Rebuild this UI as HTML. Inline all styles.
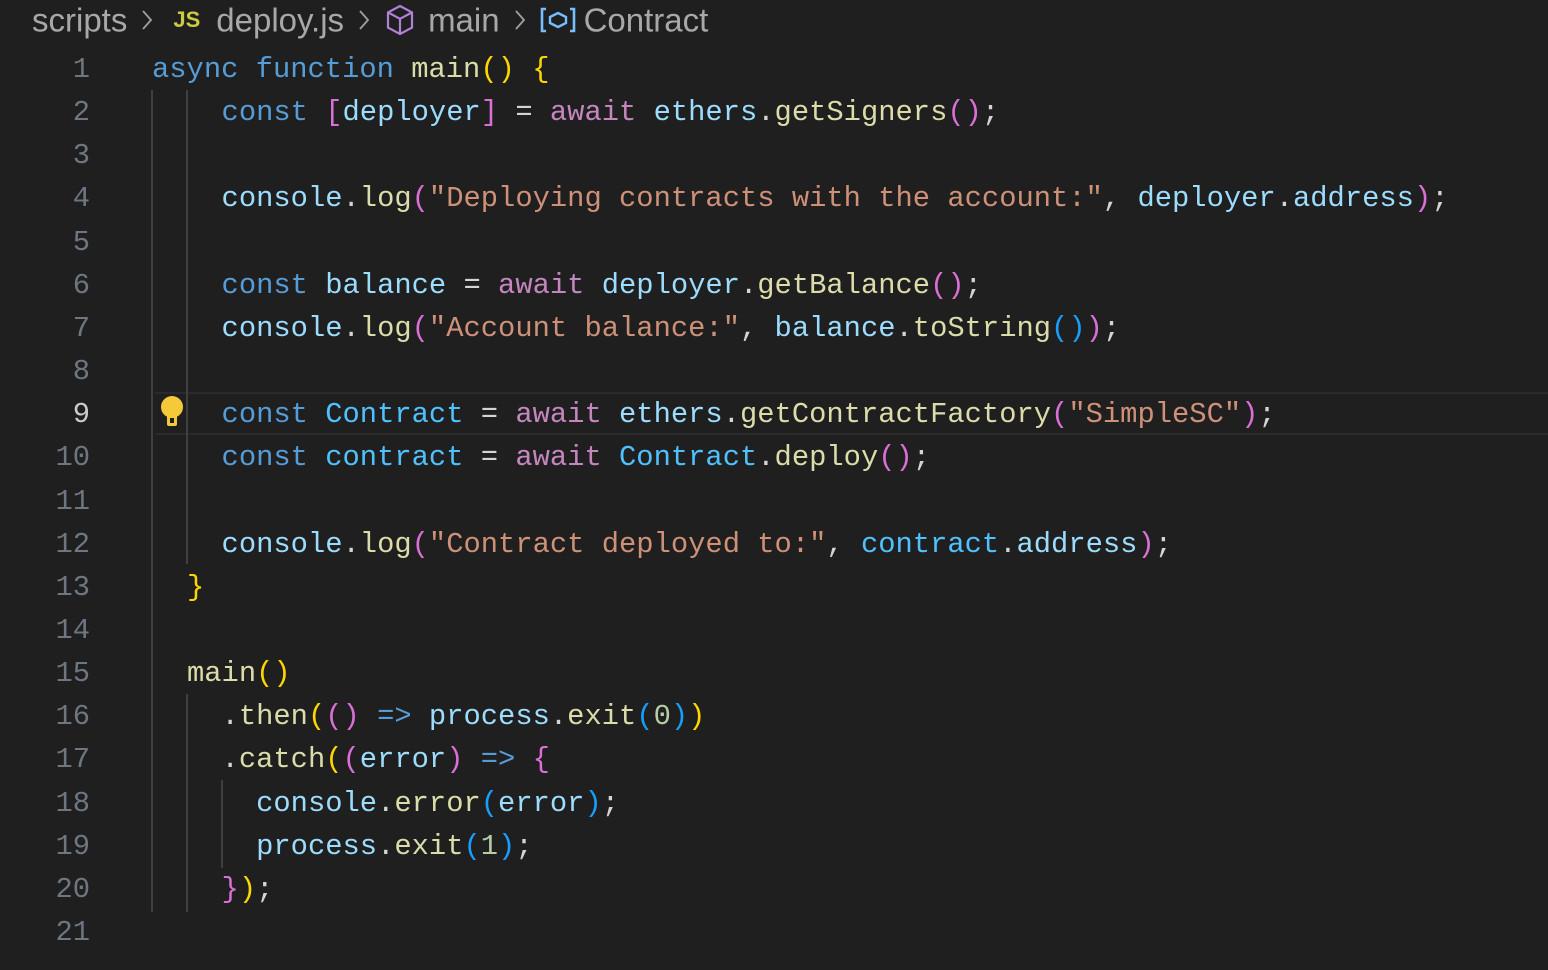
<!DOCTYPE html>
<html><head><meta charset="utf-8"><style>
body{margin:0;width:1548px;height:970px;background:#1f1f1f;overflow:hidden;position:relative;font-family:"Liberation Mono",monospace}
.bc{position:absolute;top:-2px;left:32px;height:40px;line-height:40px;font-family:"Liberation Sans",sans-serif;font-size:33px;color:#a8a8a8;white-space:nowrap}
.bc span,.bc svg{vertical-align:middle}
.sep{margin:0 14px 0 14px}
.ln{position:absolute;left:0;width:90px;text-align:right;font-size:28.8px;color:#6e7681;height:43.15px;line-height:43.15px}
.cl{position:absolute;font-size:28.8px;height:43.15px;line-height:43.15px;white-space:pre;color:#d4d4d4}
.g{position:absolute;width:2px;background:#404040}
.k{color:#569cd6}.v{color:#9cdcfe}.c{color:#4fc1ff}.f{color:#dcdcaa}.s{color:#ce9178}.a{color:#c586c0}.y{color:#ffd700}.p{color:#da70d6}.b{color:#179fff}.n{color:#b5cea8}
</style></head><body>
<div class="bc"><span>scripts</span><svg class="sep" width="12" height="24" viewBox="0 0 12 24"><path d="M2 3l8 9-8 9" fill="none" stroke="#a0a0a0" stroke-width="1.8"/></svg><span style="color:#cbcb41;font-weight:bold;font-size:22px;margin:0 16px 0 6px">JS</span><span>deploy.js</span><svg class="sep" width="12" height="24" viewBox="0 0 12 24"><path d="M2 3l8 9-8 9" fill="none" stroke="#a0a0a0" stroke-width="1.8"/></svg><svg width="32" height="34" viewBox="0 0 16 17" style="margin-right:12px"><path d="M8 1.5l6 3.2v7.6l-6 3.2-6-3.2V4.7z M2 4.7l6 3.2 6-3.2 M8 7.9v7.6" fill="none" stroke="#b180d7" stroke-width="1.1"/></svg><span>main</span><svg class="sep" width="12" height="24" viewBox="0 0 12 24"><path d="M2 3l8 9-8 9" fill="none" stroke="#a0a0a0" stroke-width="1.8"/></svg><svg width="36" height="26" viewBox="0 0 18 13" style="margin-right:8px"><path d="M3 1H1v11h2 M15 1h2v11h-2" fill="none" stroke="#75beff" stroke-width="1.3"/><path d="M9 3l4 2v3l-4 2-4-2V5z" fill="none" stroke="#75beff" stroke-width="1.2"/></svg><span>Contract</span></div>

<div style="position:absolute;left:155px;right:0;top:392px;height:43px;border-top:2px solid #2a2a2a;border-bottom:2px solid #2a2a2a;box-sizing:border-box"></div>

<div class="g" style="left:151px;top:90px;height:822px"></div>
<div class="g" style="left:186px;top:90px;height:474px"></div>
<div class="g" style="left:186px;top:694px;height:218px"></div>
<div class="g" style="left:221px;top:780px;height:88px"></div>

<svg style="position:absolute;left:159px;top:395px" width="26" height="34" viewBox="0 0 26 34"><circle cx="13" cy="12" r="11" fill="#f5c93a"/><rect x="8" y="18" width="10" height="13" rx="2" fill="#f5c93a"/><rect x="11" y="23" width="4" height="5" fill="#1f1f1f"/></svg>

<div id="c"></div>
<script>
var L=[
[152,'<span class="k">async</span> <span class="k">function</span> <span class="f">main</span><span class="y">()</span> <span class="y">{</span>'],
[2,'<span class="k">const</span> <span class="p">[</span><span class="v">deployer</span><span class="p">]</span> = <span class="a">await</span> <span class="v">ethers</span>.<span class="f">getSigners</span><span class="p">()</span>;'],
[2,''],
[2,'<span class="v">console</span>.<span class="f">log</span><span class="p">(</span><span class="s">"Deploying contracts with the account:"</span>, <span class="v">deployer</span>.<span class="v">address</span><span class="p">)</span>;'],
[2,''],
[2,'<span class="k">const</span> <span class="v">balance</span> = <span class="a">await</span> <span class="v">deployer</span>.<span class="f">getBalance</span><span class="p">()</span>;'],
[2,'<span class="v">console</span>.<span class="f">log</span><span class="p">(</span><span class="s">"Account balance:"</span>, <span class="v">balance</span>.<span class="f">toString</span><span class="b">()</span><span class="p">)</span>;'],
[2,''],
[2,'<span class="k">const</span> <span class="c">Contract</span> = <span class="a">await</span> <span class="v">ethers</span>.<span class="f">getContractFactory</span><span class="p">(</span><span class="s">"SimpleSC"</span><span class="p">)</span>;'],
[2,'<span class="k">const</span> <span class="c">contract</span> = <span class="a">await</span> <span class="c">Contract</span>.<span class="f">deploy</span><span class="p">()</span>;'],
[2,''],
[2,'<span class="v">console</span>.<span class="f">log</span><span class="p">(</span><span class="s">"Contract deployed to:"</span>, <span class="c">contract</span>.<span class="v">address</span><span class="p">)</span>;'],
[0,'<span class="y">}</span>'],
[0,''],
[0,'<span class="f">main</span><span class="y">()</span>'],
[2,'.<span class="f">then</span><span class="y">(</span><span class="p">()</span> <span class="k">=&gt;</span> <span class="v">process</span>.<span class="f">exit</span><span class="b">(</span><span class="n">0</span><span class="b">)</span><span class="y">)</span>'],
[2,'.<span class="f">catch</span><span class="y">(</span><span class="p">(</span><span class="v">error</span><span class="p">)</span> <span class="k">=&gt;</span> <span class="p">{</span>'],
[4,'<span class="v">console</span>.<span class="f">error</span><span class="b">(</span><span class="v">error</span><span class="b">)</span>;'],
[4,'<span class="v">process</span>.<span class="f">exit</span><span class="b">(</span><span class="n">1</span><span class="b">)</span>;'],
[2,'<span class="p">}</span><span class="y">)</span>;'],
[0,'']];
var h='';
for(var i=0;i<L.length;i++){var t=48+i*43.15;var x=L[i][0]>20?L[i][0]:187+L[i][0]*17.28;
h+='<div class="ln" style="top:'+t+'px'+(i==8?';color:#cccccc':'')+'">'+(i+1)+'</div>';
h+='<div class="cl" style="top:'+t+'px;left:'+x+'px">'+L[i][1]+'</div>';}
document.getElementById('c').innerHTML=h;
</script>
</body></html>
